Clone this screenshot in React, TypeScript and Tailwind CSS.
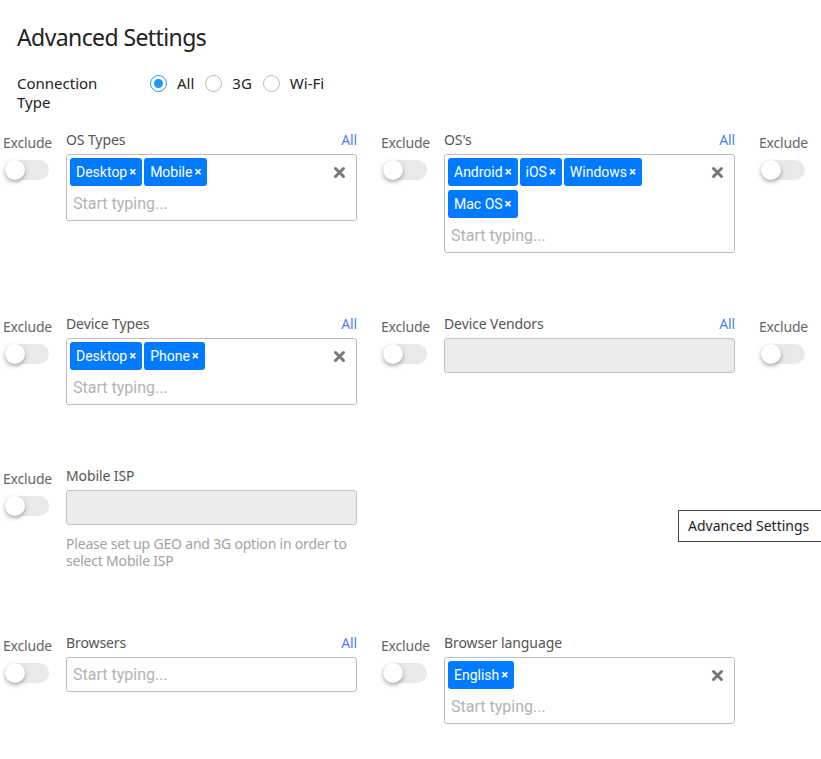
import React from "react";

const label = "font-['Noto_Sans',sans-serif]";
const roboto = "font-['Roboto',sans-serif]";

type Field = {
  name: string;
  all?: boolean;
  tags?: string[];
  disabled?: boolean;
  help?: string;
  offscreen?: boolean;
};

function Toggle() {
  return (
    <div className="relative ml-[5px] mt-[7px] h-5 w-[44px] rounded-full bg-[#e9e9e9]">
      <div className="absolute left-0 top-0 h-5 w-5 rounded-full bg-white shadow-[0_2px_4px_rgba(0,0,0,0.35)]" />
    </div>
  );
}

function ClearIcon() {
  return (
    <svg width="13" height="13" viewBox="0 0 13 13">
      <path d="M2.5 2.5 L10.5 10.5 M10.5 2.5 L2.5 10.5" stroke="#777" strokeWidth="3" strokeLinecap="round" />
    </svg>
  );
}

function Tag({ text }: { text: string }) {
  return (
    <div className={`flex h-7 items-center rounded-[3px] bg-[#007bff] px-[6px] text-[14px] text-white ${roboto}`}>
      {text}
      <span className="ml-[2px] text-[13px] font-bold">×</span>
    </div>
  );
}

function FieldBox({ f }: { f: Field }) {
  if (f.disabled) {
    return <div className="h-[35px] rounded-[3px] border border-[#c2c2c2] bg-[#ececec]" />;
  }
  if (!f.tags || f.tags.length === 0) {
    return (
      <div className="flex h-[35px] items-center rounded-[3px] border border-[#bdbdbd] px-[6px]">
        <span className={`text-[16px] text-[#b3b3b3] ${roboto}`}>Start typing...</span>
      </div>
    );
  }
  return (
    <div className="flex rounded-[3px] border border-[#bdbdbd] p-[3px]">
      <div className="flex-1">
        <div className="flex flex-wrap gap-x-[2px] gap-y-[4px]">
          {f.tags.map((t) => (
            <Tag key={t} text={t} />
          ))}
        </div>
        <div className={`flex h-[31px] items-center pl-[3px] pt-[4px] text-[16px] text-[#b3b3b3] ${roboto}`}>
          Start typing...
        </div>
      </div>
      <div className="flex h-7 items-center pr-[7px]">
        <ClearIcon />
      </div>
    </div>
  );
}

function Cell({ f }: { f?: Field }) {
  if (!f) return <div className="w-[378px] shrink-0" />;
  return (
    <div className="flex w-[378px] shrink-0">
      <div className="w-[66px] shrink-0">
        <div className={`mt-[3px] h-5 pl-[3px] text-[14px] leading-5 tracking-[-0.2px] text-[#666] ${label}`}>
          Exclude
        </div>
        <Toggle />
      </div>
      {!f.offscreen && (
        <div className="w-[291px] shrink-0">
          <div className={`flex h-5 justify-between text-[14px] leading-5 tracking-[-0.1px] ${label}`}>
            <span className="text-[#555]">{f.name}</span>
            {f.all && <span className="text-[#4f7ff2]">All</span>}
          </div>
          <div className="mt-1">
            <FieldBox f={f} />
          </div>
          {f.help && (
            <div
              className={`mt-[10px] pb-[3px] text-[14px] leading-[17px] tracking-[-0.2px] text-[#a3a3a3] ${label}`}
            >
              {f.help}
            </div>
          )}
        </div>
      )}
    </div>
  );
}

const rows: (Field | undefined)[][] = [
  [
    { name: "OS Types", all: true, tags: ["Desktop", "Mobile"] },
    { name: "OS's", all: true, tags: ["Android", "iOS", "Windows", "Mac OS"] },
    { name: "Platforms", offscreen: true },
  ],
  [
    { name: "Device Types", all: true, tags: ["Desktop", "Phone"] },
    { name: "Device Vendors", all: true, disabled: true },
    { name: "Device Models", offscreen: true },
  ],
  [
    {
      name: "Mobile ISP",
      disabled: true,
      help: "Please set up GEO and 3G option in order to select Mobile ISP",
    },
  ],
  [
    { name: "Browsers", all: true, tags: [] },
    { name: "Browser language", tags: ["English"] },
  ],
];

function Radio({ text, checked }: { text: string; checked?: boolean }) {
  return (
    <div className="mr-[11px] flex items-center">
      <span
        className={`flex h-[17px] w-[17px] items-center justify-center rounded-full border ${
          checked ? "border-[#2196f3]" : "border-[#bbb]"
        }`}
      >
        {checked && <span className="h-[9px] w-[9px] rounded-full bg-[#2196f3]" />}
      </span>
      <span className="ml-[10px]">{text}</span>
    </div>
  );
}

export default function App() {
  return (
    <div className="relative h-[759px] w-[821px] overflow-hidden bg-white pt-[21px]">
      <h1 className={`h-8 pl-[17px] text-[23px] leading-8 tracking-[-0.6px] text-[#222] ${label}`}>
        Advanced Settings
      </h1>
      <div className={`mt-[21px] flex pl-[17px] text-[15px] leading-[19px] text-[#222] ${label}`}>
        <div className="w-[133px] shrink-0 pr-8">Connection Type</div>
        <div className="flex h-[19px] items-center">
          <Radio text="All" checked />
          <Radio text="3G" />
          <Radio text="Wi-Fi" />
        </div>
      </div>
      <div className="mt-[18px] flex flex-col gap-[61px]">
        {rows.map((r, i) => (
          <div key={i} className="flex items-start">
            {r.map((f, j) => (
              <Cell key={j} f={f} />
            ))}
          </div>
        ))}
      </div>
      <div
        className={`absolute left-[678px] top-[510px] w-[160px] whitespace-nowrap border border-[#444] bg-white px-[9px] py-[5px] text-[14px] leading-5 text-[#222] ${label}`}
      >
        Advanced Settings
      </div>
    </div>
  );
}
